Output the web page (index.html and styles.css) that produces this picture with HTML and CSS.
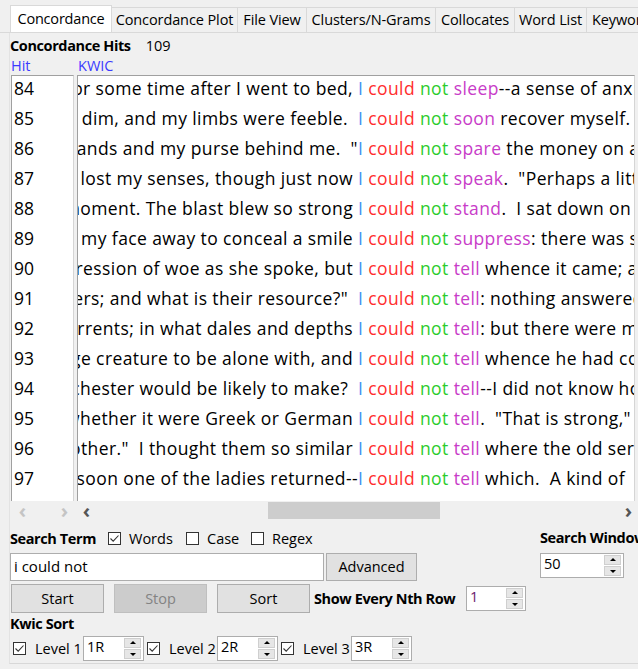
FILE: index.html
```html
<!DOCTYPE html>
<html>
<head>
<meta charset="utf-8">
<link rel="stylesheet" href="styles.css">
</head>
<body>
<div class="app">
  <div class="tabs">
    <div class="tab active t1">Concordance</div>
    <div class="tab t2">Concordance Plot</div>
    <div class="tab t3">File View</div>
    <div class="tab t4">Clusters/N-Grams</div>
    <div class="tab t5">Collocates</div>
    <div class="tab t6">Word List</div>
    <div class="tab t7">Keyword List</div>
  </div>
  <div class="panel">
    <div class="hits"><b>Concordance Hits</b><span class="hits-num">109</span></div>
    <div class="colheads"><span class="h-hit">Hit</span><span class="h-kwic">KWIC</span></div>
    <div class="lists">
      <div class="hitcol">
        <div class="hitbox">
          <div class="hrow">84</div><div class="hrow">85</div><div class="hrow">86</div><div class="hrow">87</div>
          <div class="hrow">88</div><div class="hrow">89</div><div class="hrow">90</div><div class="hrow">91</div>
          <div class="hrow">92</div><div class="hrow">93</div><div class="hrow">94</div><div class="hrow">95</div>
          <div class="hrow">96</div><div class="hrow">97</div>
        </div>
        <div class="hscroll small"><span class="arr dis">&lsaquo;</span><span class="arr dis">&rsaquo;</span></div>
      </div>
      <div class="kwiccol">
        <div class="kwicbox">
          <div class="krow"><span class="lw"><span class="lt">For some time after I went to bed, </span></span><span class="k1">I</span> <span class="k2">could</span> <span class="k3">not</span> <span class="k4">sleep</span><span class="rt">--a sense of anxiety</span></div>
          <div class="krow"><span class="lw"><span class="lt">My sight was dim, and my limbs were feeble.  </span></span><span class="k1">I</span> <span class="k2">could</span> <span class="k3">not</span> <span class="k4">soon</span><span class="rt"> recover myself.</span></div>
          <div class="krow"><span class="lw"><span class="lt">my hands and my purse behind me.  "</span></span><span class="k1">I</span> <span class="k2">could</span> <span class="k3">not</span> <span class="k4">spare</span><span class="rt"> the money on a</span></div>
          <div class="krow"><span class="lw"><span class="lt">I had lost my senses, though just now </span></span><span class="k1">I</span> <span class="k2">could</span> <span class="k3">not</span> <span class="k4">speak</span><span class="rt">.  "Perhaps a little</span></div>
          <div class="krow"><span class="lw"><span class="lt">for a moment. The blast blew so strong </span></span><span class="k1">I</span> <span class="k2">could</span> <span class="k3">not</span> <span class="k4">stand</span><span class="rt">.  I sat down on</span></div>
          <div class="krow"><span class="lw"><span class="lt">I turned my face away to conceal a smile </span></span><span class="k1">I</span> <span class="k2">could</span> <span class="k3">not</span> <span class="k4">suppress</span><span class="rt">: there was some</span></div>
          <div class="krow"><span class="lw"><span class="lt">an expression of woe as she spoke, but </span></span><span class="k1">I</span> <span class="k2">could</span> <span class="k3">not</span> <span class="k4">tell</span><span class="rt"> whence it came; and</span></div>
          <div class="krow"><span class="lw"><span class="lt">are the rivers; and what is their resource?"  </span></span><span class="k1">I</span> <span class="k2">could</span> <span class="k3">not</span> <span class="k4">tell</span><span class="rt">: nothing answered</span></div>
          <div class="krow"><span class="lw"><span class="lt">of the currents; in what dales and depths </span></span><span class="k1">I</span> <span class="k2">could</span> <span class="k3">not</span> <span class="k4">tell</span><span class="rt">: but there were many</span></div>
          <div class="krow"><span class="lw"><span class="lt">a strange creature to be alone with, and </span></span><span class="k1">I</span> <span class="k2">could</span> <span class="k3">not</span> <span class="k4">tell</span><span class="rt"> whence he had come</span></div>
          <div class="krow"><span class="lw"><span class="lt">Mr. Rochester would be likely to make?  </span></span><span class="k1">I</span> <span class="k2">could</span> <span class="k3">not</span> <span class="k4">tell</span><span class="rt">--I did not know how</span></div>
          <div class="krow"><span class="lw"><span class="lt">but whether it were Greek or German </span></span><span class="k1">I</span> <span class="k2">could</span> <span class="k3">not</span> <span class="k4">tell</span><span class="rt">.  "That is strong," said</span></div>
          <div class="krow"><span class="lw"><span class="lt">each other."  I thought them so similar </span></span><span class="k1">I</span> <span class="k2">could</span> <span class="k3">not</span> <span class="k4">tell</span><span class="rt"> where the old servant</span></div>
          <div class="krow"><span class="lw"><span class="lt">Very soon one of the ladies returned--</span></span><span class="k1">I</span> <span class="k2">could</span> <span class="k3">not</span> <span class="k4">tell</span><span class="rt"> which.  A kind of</span></div>
        </div>
        <div class="hscroll"><span class="arr">&lsaquo;</span><span class="track"><span class="thumb"></span></span><span class="arr">&rsaquo;</span></div>
      </div>
    </div>

    <div class="search-area">
      <div class="search-main">
        <div class="row r1">
          <b class="lbl">Search Term</b>
          <span class="chk c1 on"><svg width="13" height="13" viewBox="0 0 13 13"><path d="M2.5 6.5 L5.2 9.2 L10.5 3.5" fill="none" stroke="#333" stroke-width="1.1"/></svg></span><span class="clbl w1">Words</span>
          <span class="chk"></span><span class="clbl w2">Case</span>
          <span class="chk"></span><span class="clbl">Regex</span>
        </div>
        <div class="row r2">
          <div class="textin">i could not</div>
          <div class="btn adv">Advanced</div>
        </div>
      </div>
      <div class="search-win">
        <b class="lbl">Search Window Size</b>
        <div class="spin sw"><span class="sv">50</span><span class="sbtns"><span class="sb up"></span><span class="sb dn"></span></span></div>
      </div>
    </div>

    <div class="row r3">
      <div class="btn">Start</div>
      <div class="btn dis">Stop</div>
      <div class="btn">Sort</div>
      <b class="lbl nth">Show Every Nth Row</b>
      <div class="spin sn"><span class="sv nv">1</span><span class="sbtns"><span class="sb up"></span><span class="sb dn"></span></span></div>
    </div>

    <div class="kwicsort"><b class="lbl">Kwic Sort</b></div>
    <div class="row r4">
      <span class="chk on"><svg width="13" height="13" viewBox="0 0 13 13"><path d="M2.5 6.5 L5.2 9.2 L10.5 3.5" fill="none" stroke="#333" stroke-width="1.1"/></svg></span><span class="llbl">Level 1</span>
      <div class="spin sl"><span class="sv">1R</span><span class="sbtns"><span class="sb up"></span><span class="sb dn"></span></span></div>
      <span class="chk on"><svg width="13" height="13" viewBox="0 0 13 13"><path d="M2.5 6.5 L5.2 9.2 L10.5 3.5" fill="none" stroke="#333" stroke-width="1.1"/></svg></span><span class="llbl">Level 2</span>
      <div class="spin sl"><span class="sv">2R</span><span class="sbtns"><span class="sb up"></span><span class="sb dn"></span></span></div>
      <span class="chk on"><svg width="13" height="13" viewBox="0 0 13 13"><path d="M2.5 6.5 L5.2 9.2 L10.5 3.5" fill="none" stroke="#333" stroke-width="1.1"/></svg></span><span class="llbl">Level 3</span>
      <div class="spin sl"><span class="sv">3R</span><span class="sbtns"><span class="sb up"></span><span class="sb dn"></span></span></div>
    </div>
  </div>
</div>
</body>
</html>
```

FILE: styles.css
```css
* { box-sizing: border-box; }
html, body {
  margin: 0;
  padding: 0;
  background: #f0f0f0;
  width: 638px;
  height: 669px;
  overflow: hidden;
}
body {
  font-family: "Open Sans", "Noto Sans", sans-serif;
  font-size: 14.5px;
  color: #000;
}
.app { width: 638px; overflow: hidden; }

.tabs {
  display: flex;
  align-items: flex-end;
  padding: 5px 0 0 10px;
  height: 33px;
  white-space: nowrap;
  overflow: hidden;
  border-bottom: 1px solid #d9d9d9;
}
.tab {
  flex-shrink: 0;
  height: 25px;
  line-height: 24px;
  border: 1px solid #d9d9d9;
  border-bottom: none;
  border-left: none;
  background: #f0f0f0;
  color: #000;
  font-size: 14.5px;
  letter-spacing: -0.1px;
  text-align: center;
  overflow: hidden;
}
.tab.active {
  height: 28px;
  line-height: 26px;
  background: #fff;
  border-left: 1px solid #d9d9d9;
  margin-bottom: -1px;
  position: relative;
  letter-spacing: -0.2px;
}
.t1 { width: 102px; }
.t2 { width: 126px; }
.t3 { width: 69px; }
.t4 { width: 129px; }
.t5 { width: 79px; }
.t6 { width: 72px; }
.t7 { width: 100px; text-align: left; padding-left: 5px; }

.panel {
  margin-left: 9px;
  height: 631px;
  border-left: 1px solid #e3e3e3;
  border-bottom: 1px solid #d8d8d8;
}
.hits {
  height: 24px;
  padding-top: 2px;
  line-height: 22px;
}
.hits b { font-weight: 700; letter-spacing: -0.4px; }
.hits-num { margin-left: 15px; }

.colheads {
  height: 18px;
  line-height: 18px;
  color: #3b3bff;
  display: flex;
}
.h-hit { margin-left: 1px; width: 67px; }

.lists { display: flex; }
.hitcol { width: 63px; margin-left: 1px; }
.hitbox {
  height: 426px;
  background: #fff;
  border-left: 1px solid #a0a0a0;
  border-top: 1px solid #a0a0a0;
  border-right: 1px solid #d5d5d5;
  font-size: 17.5px;
}
.hrow {
  height: 30px;
  line-height: 24px;
  padding-left: 2px;
}
.kwiccol { margin-left: 3px; width: 561px; }
.kwicbox {
  height: 426px;
  background: #fff;
  border-left: 1px solid #a0a0a0;
  border-top: 1px solid #a0a0a0;
  border-right: 1px solid #d5d5d5;
  font-size: 17.5px;
  letter-spacing: 0.4px;
  overflow: hidden;
  width: 558px;
}
.krow {
  height: 30px;
  line-height: 24px;
  overflow: hidden;
  white-space: pre;
}
.lw {
  display: inline-flex;
  vertical-align: top;
  width: 280px;
  justify-content: flex-end;
  overflow: hidden;
}
.lt { flex-shrink: 0; white-space: pre; }
.k1 { color: #3d8ff2; }
.k2 { color: #ff2e2e; }
.k3 { color: #2ccc2c; }
.k4 { color: #c83cc8; }

.hscroll {
  height: 19px;
  display: flex;
  align-items: center;
  font-size: 20px;
  line-height: 19px;
  font-weight: 700;
}
.arr {
  width: 19px;
  text-align: center;
  color: #555;
  flex-shrink: 0;
}
.hscroll.small .arr { width: 21px; margin-left: 1px; }
.hscroll.small .arr + .arr { margin-left: 21px; }
.arr.dis { color: #c4c4c4; }
.track { flex: 1; height: 19px; position: relative; }
.thumb {
  position: absolute;
  left: 172px;
  width: 172px;
  top: 1px;
  height: 17px;
  background: #cdcdcd;
}

.lbl { font-weight: 700; letter-spacing: -0.4px; white-space: nowrap; }

.search-area { display: flex; margin-top: 8px; }
.search-main { width: 530px; }
.row { display: flex; align-items: center; white-space: nowrap; }
.r1 { height: 20px; }
.r1 .lbl { width: 98px; }
.chk {
  width: 13px;
  height: 13px;
  border: 1px solid #333;
  background: #fff;
  flex-shrink: 0;
  position: relative;
}
.chk svg { position: absolute; left: -1px; top: -1px; }
.clbl { margin-left: 8px; }
.w1 { width: 57px; }
.w2 { width: 44px; }
.r2 { margin-top: 5px; height: 28px; }
.textin {
  width: 314px;
  height: 28px;
  border: 1px solid #adadad;
  background: #fff;
  padding-left: 3px;
  line-height: 25px;
  font-size: 15px;
}
.btn {
  height: 28px;
  border: 1px solid #adadad;
  background: #e1e1e1;
  text-align: center;
  line-height: 26px;
}
.adv { width: 91px; margin-left: 2px; }
.search-win { display: flex; flex-direction: column; width: 98px; overflow: hidden; }
.search-win .lbl { height: 20px; line-height: 20px; }

.spin {
  display: flex;
  background: #fff;
  border: 1px solid #adadad;
  flex-shrink: 0;
}
.sv { flex: 1; padding-left: 3px; line-height: 20px; }
.sbtns {
  display: flex;
  flex-direction: column;
  justify-content: center;
  gap: 1px;
  padding: 1px 2px 1px 0;
}
.sb {
  width: 17px;
  flex: 1;
  background: #e6e6e6;
  border: 1px solid #cfcfcf;
  position: relative;
}
.sb::after {
  content: "";
  position: absolute;
  left: 5px;
  width: 0;
  height: 0;
  border-left: 3px solid transparent;
  border-right: 3px solid transparent;
}
.sb.up::after { top: 2px; border-bottom: 3px solid #000; }
.sb.dn::after { top: 3px; border-top: 3px solid #000; }

.sw { width: 84px; height: 25px; margin-top: 5px; }

.r3 { height: 29px; margin-top: 3px; }
.r3 .btn { width: 93px; height: 29px; line-height: 27px; margin-left: 1px; margin-right: 9px; }
.r3 .btn.dis { background: #cccccc; color: #838383; border-color: #bfbfbf; }
.nth { margin-left: -5px; width: 152px; }
.sn { width: 60px; height: 25px; }
.nv { color: #6b1a6b; }

.kwicsort { height: 20px; line-height: 20px; margin-top: 1px; }
.r4 { height: 26px; margin-top: 1px; }
.r4 .chk { margin-left: 3px; }
.llbl { margin-left: 9px; width: 48px; }
.sl { width: 61px; height: 25px; }
```
